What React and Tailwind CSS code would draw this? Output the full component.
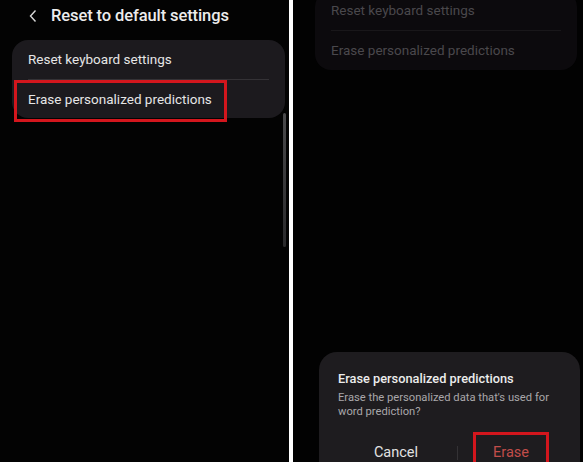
import React from "react";

export default function App() {
  const font = { fontFamily: "Roboto, 'Noto Sans', sans-serif" };
  return (
    <div className="flex w-[583px] h-[462px] overflow-hidden bg-white" style={font}>
      {/* Left phone */}
      <div className="relative w-[289px] h-full bg-[#030303] flex flex-col">
        <div className="h-[32px] flex items-center pl-[28px]">
          <svg width="10" height="14" viewBox="0 0 10 14" className="mr-[13px]">
            <path d="M7.5 1.5 L2.5 7 L7.5 12.5" fill="none" stroke="#d8d8d8" strokeWidth="1.4" />
          </svg>
          <span className="text-[16.5px] font-medium text-[#ececec] tracking-[-0.1px]">Reset to default settings</span>
        </div>
        <div className="mt-[8px] ml-[12px] mr-[4px] rounded-[16px] bg-[#1c1a1e] px-[16px]">
          <div className="h-[39px] flex items-center text-[13.5px] text-[#e6e6e6]">Reset keyboard settings</div>
          <div className="h-px bg-[#343236]" />
          <div className="h-[38px] flex items-center text-[13.5px] text-[#e6e6e6]">Erase personalized predictions</div>
        </div>
        <div className="absolute left-[14px] top-[80px] w-[213px] h-[42px] border-[3px] border-[#d3161d]" />
        <div className="absolute left-[283px] top-[113px] w-[3px] h-[134px] rounded-full bg-gradient-to-b from-[#4a4a4c] to-[#2a2a2c]" />
      </div>

      <div className="w-[4px] h-full bg-white" />

      {/* Right phone */}
      <div className="relative flex-1 h-full bg-[#020202] flex flex-col">
        <div className="-mt-[9px] ml-[22px] mr-[6px] rounded-[16px] bg-[#0c0a0d] px-[16px]">
          <div className="h-[39px] flex items-center text-[13.5px] text-[#4a484c]">Reset keyboard settings</div>
          <div className="h-px bg-[#19171a]" />
          <div className="h-[39px] flex items-center text-[13.5px] text-[#4a484c]">Erase personalized predictions</div>
        </div>

        <div className="mt-auto ml-[26px] mr-[3px] h-[110px] rounded-t-[18px] bg-[#1e1c1f] flex flex-col">
          <div className="pt-[19px] pl-[19px] text-[12.8px] leading-[15px] font-medium text-[#ececec]">
            Erase personalized predictions
          </div>
          <div className="mt-[5px] pl-[19px] pr-[10px] text-[11.2px] leading-[13.5px] text-[#a9a7aa]">
            Erase the personalized data that's used for word prediction?
          </div>
          <div className="mt-[14px] pl-[26px] flex items-start h-[34px]">
            <div className="w-[102px] pt-[12px] text-center text-[14.5px] leading-[18px] text-[#e2e2e2]">Cancel</div>
            <div className="ml-[10px] mt-[14px] w-px h-[14px] bg-[#343235]" />
            <div className="ml-[15px] w-[76px] h-[34px] border-[3px] border-b-0 border-[#d3161d] pt-[9px] text-center text-[14.5px] leading-[18px] text-[#c24d4a]">
              Erase
            </div>
          </div>
        </div>
      </div>
    </div>
  );
}
